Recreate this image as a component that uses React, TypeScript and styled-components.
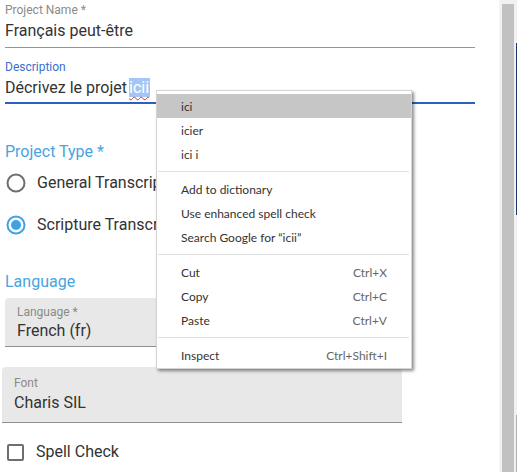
import styled, { createGlobalStyle } from 'styled-components';

const GlobalStyle = createGlobalStyle`
	html, body {
		margin: 0;
		padding: 0;
		background: #ffffff;
		overflow: hidden;
	}
	body {
		font-family: Roboto, "Liberation Sans", sans-serif;
	}
`;

const Page = styled.div`
	position: relative;
	display: flex;
	width: 517px;
	height: 472px;
	overflow: hidden;
`;

const Form = styled.div`
	flex: 1;
	display: flex;
	flex-direction: column;
	padding: 2px 24px 0 5px;
`;

const Field = styled.div<{ $gap?: number }>`
	display: flex;
	flex-direction: column;
	margin-bottom: ${(p) => p.$gap ?? 0}px;
`;

const Label = styled.div<{ $focused?: boolean }>`
	font-size: 12px;
	line-height: 16px;
	color: ${(p) => (p.$focused ? '#3a6fce' : '#8a8a8a')};
`;

const Input = styled.div<{ $focused?: boolean }>`
	margin-top: 3px;
	font-size: 16px;
	line-height: 20px;
	color: #333333;
	padding-bottom: ${(p) => (p.$focused ? 4 : 6)}px;
	border-bottom: ${(p) => (p.$focused ? '2px solid #2b5fc0' : '1px solid #949494')};
	white-space: nowrap;
`;

const Selected = styled.span`
	background: #a3c6f6;
	color: #ffffff;
	text-decoration: underline wavy #e03030;
	text-decoration-thickness: 1px;
	text-underline-offset: 3px;
	padding: 0 1px 0 0;
	margin-left: 2px;
`;

const Heading = styled.div<{ $top: number }>`
	margin-top: ${(p) => p.$top}px;
	font-size: 16px;
	line-height: 20px;
	color: #47a4e2;
`;

const RadioRow = styled.label<{ $top: number }>`
	display: flex;
	align-items: center;
	gap: 11px;
	margin-top: ${(p) => p.$top}px;
	margin-left: 1px;
	font-size: 16px;
	line-height: 20px;
	color: #333333;
	white-space: nowrap;
`;

const FilledBox = styled.div<{ $top: number; $width: number; $left: number; $height: number; $pad: number }>`
	margin-top: ${(p) => p.$top}px;
	margin-left: ${(p) => p.$left}px;
	width: ${(p) => p.$width}px;
	height: ${(p) => p.$height}px;
	box-sizing: border-box;
	padding: ${(p) => p.$pad}px 0 0 12px;
	background: #e8e8e8;
	border-bottom: 1px solid #8f8f8f;
	border-radius: 4px 4px 0 0;
	display: flex;
	flex-direction: column;
`;

const FilledLabel = styled.div`
	font-size: 12px;
	line-height: 16px;
	color: #8a8a8a;
`;

const FilledValue = styled.div<{ $top: number }>`
	margin-top: ${(p) => p.$top}px;
	font-size: 16px;
	line-height: 20px;
	color: #333333;
`;

const CheckRow = styled.label`
	display: flex;
	align-items: center;
	gap: 12px;
	margin-top: 19px;
	margin-left: 2px;
	font-size: 16px;
	line-height: 20px;
	color: #333333;
`;

const CheckBox = styled.span`
	width: 17px;
	height: 17px;
	box-sizing: border-box;
	border: 2px solid #6e6e6e;
	border-radius: 2px;
`;

const Scrollbar = styled.div`
	width: 18px;
	display: flex;
	background: #f1f1f1;
	border-left: 1px solid #f6f6f6;
	box-sizing: border-box;
`;

const Thumb = styled.div`
	margin: 4px 2px 0 2px;
	flex: 1;
	background: #c1c1c1;
`;

const EdgeLine = styled.div`
	width: 1px;
	background: linear-gradient(
		to bottom,
		#f1f1f1 0,
		#f1f1f1 43px,
		#1f3a66 43px,
		#1f3a66 215px,
		#f1f1f1 215px,
		#f1f1f1 415px,
		#b0b0b0 415px
	);
`;

const Menu = styled.div`
	position: absolute;
	left: 156px;
	top: 90px;
	width: 256px;
	box-sizing: border-box;
	padding: 3px 0 1px;
	background: #ffffff;
	border: 1px solid #d4d4d4;
	box-shadow: 2px 2px 3px rgba(0, 0, 0, 0.45);
	font-family: Lato, "Open Sans", sans-serif;
	font-size: 12px;
	color: #333333;
`;

const MenuItem = styled.div<{ $active?: boolean }>`
	display: flex;
	justify-content: space-between;
	align-items: center;
	height: 24px;
	padding: 0 24px 0 24px;
	background: ${(p) => (p.$active ? '#c6c6c6' : 'transparent')};
	white-space: nowrap;
`;

const Shortcut = styled.span`
	color: #666666;
`;

const Separator = styled.div`
	height: 1px;
	margin: 5px 2px 5px 1px;
	background: #e0e0e0;
`;

function RadioIcon({ checked }: { checked?: boolean }) {
	const color = checked ? '#3ea2e6' : '#6e6e6e';
	return (
		<svg width="20" height="20" viewBox="0 0 20 20">
			<circle cx="10" cy="10" r="8.5" fill="none" stroke={color} strokeWidth="2" />
			{checked && <circle cx="10" cy="10" r="5" fill={color} />}
		</svg>
	);
}

const menu: ({ label: string; shortcut?: string; active?: boolean } | 'sep')[] = [
	{ label: 'ici', active: true },
	{ label: 'icier' },
	{ label: 'ici i' },
	'sep',
	{ label: 'Add to dictionary' },
	{ label: 'Use enhanced spell check' },
	{ label: 'Search Google for “icii”' },
	'sep',
	{ label: 'Cut', shortcut: 'Ctrl+X' },
	{ label: 'Copy', shortcut: 'Ctrl+C' },
	{ label: 'Paste', shortcut: 'Ctrl+V' },
	'sep',
	{ label: 'Inspect', shortcut: 'Ctrl+Shift+I' },
];

export default function App() {
	return (
		<Page>
			<GlobalStyle />
			<Form>
				<Field $gap={11}>
					<Label>Project Name *</Label>
					<Input>Français peut-être</Input>
				</Field>
				<Field>
					<Label $focused>Description</Label>
					<Input $focused>
						Décrivez le projet<Selected>icii</Selected>
					</Input>
				</Field>

				<Heading $top={38}>Project Type *</Heading>
				<RadioRow $top={11}>
					<RadioIcon />
					General Transcription
				</RadioRow>
				<RadioRow $top={22}>
					<RadioIcon checked />
					Scripture Transcription
				</RadioRow>

				<Heading $top={37}>Language</Heading>
				<FilledBox $top={6} $left={0} $width={395} $height={49} $pad={6}>
					<FilledLabel>Language *</FilledLabel>
					<FilledValue $top={1}>French (fr)</FilledValue>
				</FilledBox>
				<FilledBox $top={20} $left={-3} $width={400} $height={56} $pad={8}>
					<FilledLabel>Font</FilledLabel>
					<FilledValue $top={2}>Charis SIL</FilledValue>
				</FilledBox>

				<CheckRow>
					<CheckBox />
					Spell Check
				</CheckRow>
			</Form>
			<Scrollbar>
				<Thumb />
				<EdgeLine />
			</Scrollbar>

			<Menu>
				{menu.map((item, i) =>
					item === 'sep' ? (
						<Separator key={i} />
					) : (
						<MenuItem key={i} $active={item.active}>
							<span>{item.label}</span>
							{item.shortcut && <Shortcut>{item.shortcut}</Shortcut>}
						</MenuItem>
					)
				)}
			</Menu>
		</Page>
	);
}
